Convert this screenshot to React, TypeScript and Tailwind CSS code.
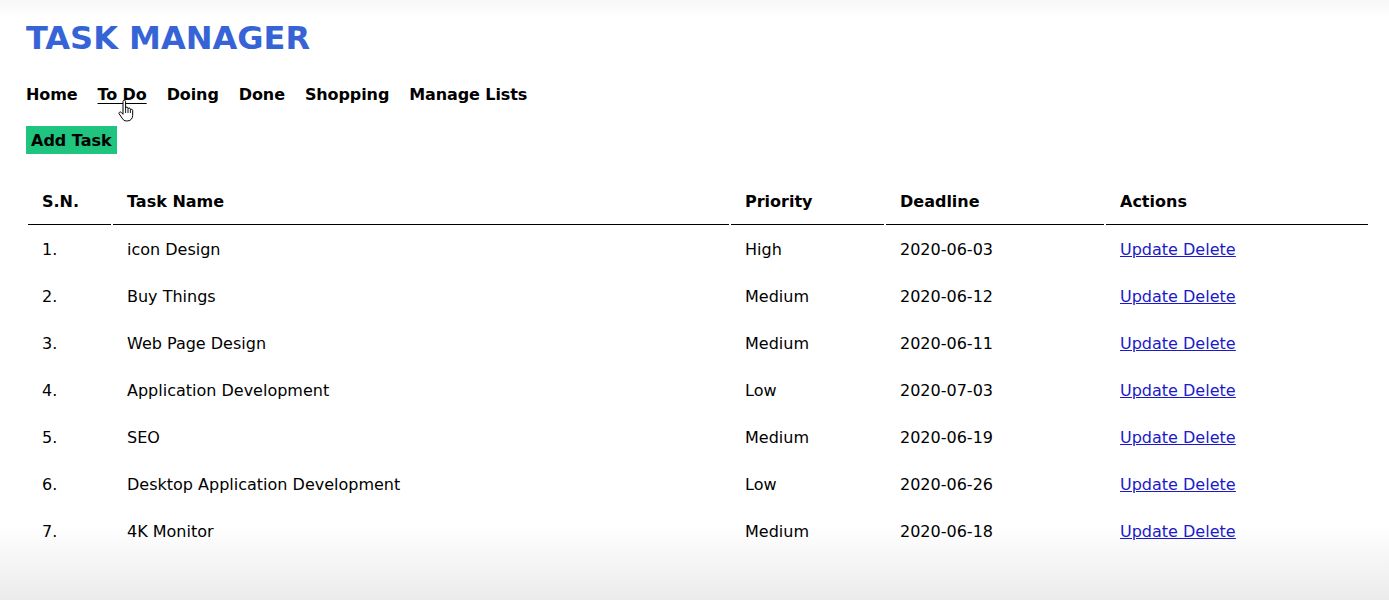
const tasks = [
  { name: 'icon Design', priority: 'High', deadline: '2020-06-03' },
  { name: 'Buy Things', priority: 'Medium', deadline: '2020-06-12' },
  { name: 'Web Page Design', priority: 'Medium', deadline: '2020-06-11' },
  { name: 'Application Development', priority: 'Low', deadline: '2020-07-03' },
  { name: 'SEO', priority: 'Medium', deadline: '2020-06-19' },
  { name: 'Desktop Application Development', priority: 'Low', deadline: '2020-06-26' },
  { name: '4K Monitor', priority: 'Medium', deadline: '2020-06-18' },
]

const navLinks = ['Home', 'To Do', 'Doing', 'Done', 'Shopping', 'Manage Lists']

function HandCursor() {
  return (
    <svg
      className="pointer-events-none absolute left-[20px] top-[15px]"
      width="17"
      height="22"
      viewBox="0 0 17 22"
    >
      <path
        d="M5 1.5c0-.8.6-1.3 1.3-1.3S7.6.7 7.6 1.5V8c.2-.6.7-.9 1.2-.9.7 0 1.2.5 1.2 1.2v.5c.2-.5.7-.8 1.2-.8.7 0 1.2.5 1.2 1.2v.7c.2-.4.6-.6 1.1-.6.7 0 1.2.5 1.2 1.2v4.8c0 3-2 5.6-5 5.6H8.2c-1.6 0-2.7-.8-3.6-2L1.3 14c-.5-.6-.4-1.4.2-1.8.6-.4 1.3-.3 1.8.2L5 14.3V1.5z"
        fill="white"
        stroke="black"
        strokeWidth="1"
        strokeLinejoin="round"
      />
      <path d="M7.6 8v5M10 9v4M12.4 10v3" stroke="black" strokeWidth="0.9" />
    </svg>
  )
}

export default function App() {
  return (
    <div className="min-h-[600px] w-full bg-[linear-gradient(to_bottom,#f7f7f7_0px,#ffffff_18px,#ffffff_525px,#ebebeb_600px)] pl-[26px] pr-[19px] pt-[18px] font-['DejaVu_Sans',Verdana,sans-serif] text-black">
      <h1 className="text-[32px] font-bold leading-[41px] text-[#3664d6]">TASK MANAGER</h1>

      <nav className="mt-[26px] flex gap-[20px] text-base font-bold leading-[19px] tracking-[-0.1px]">
        {navLinks.map((link) =>
          link === 'To Do' ? (
            <a key={link} href="#" className="relative underline underline-offset-[3px]">
              {link}
              <HandCursor />
            </a>
          ) : (
            <a key={link} href="#">
              {link}
            </a>
          ),
        )}
      </nav>

      <button className="mt-[22px] h-[28px] bg-[#1fc47f] px-[5px] text-base font-bold leading-[19px] text-black">
        Add Task
      </button>

      <table className="mt-[23px] w-full table-fixed border-separate border-spacing-[2px] text-base">
        <thead>
          <tr>
            <th className="h-[46px] w-[83px] border-b border-black px-[14px] text-left font-bold">S.N.</th>
            <th className="h-[46px] w-[616px] border-b border-black px-[14px] text-left font-bold">Task Name</th>
            <th className="h-[46px] w-[153px] border-b border-black px-[14px] text-left font-bold">Priority</th>
            <th className="h-[46px] w-[218px] border-b border-black px-[14px] text-left font-bold">Deadline</th>
            <th className="h-[46px] border-b border-black px-[14px] text-left font-bold">Actions</th>
          </tr>
        </thead>
        <tbody>
          {tasks.map((task, i) => (
            <tr key={task.name}>
              <td className="h-[45px] px-[14px]">{i + 1}.</td>
              <td className="h-[45px] px-[14px]">{task.name}</td>
              <td className="h-[45px] px-[14px]">{task.priority}</td>
              <td className="h-[45px] px-[14px]">{task.deadline}</td>
              <td className="h-[45px] px-[14px]">
                <span className="text-[#1a1ac8] underline">
                  <a href="#">Update</a> <a href="#">Delete</a>
                </span>
              </td>
            </tr>
          ))}
        </tbody>
      </table>
    </div>
  )
}
